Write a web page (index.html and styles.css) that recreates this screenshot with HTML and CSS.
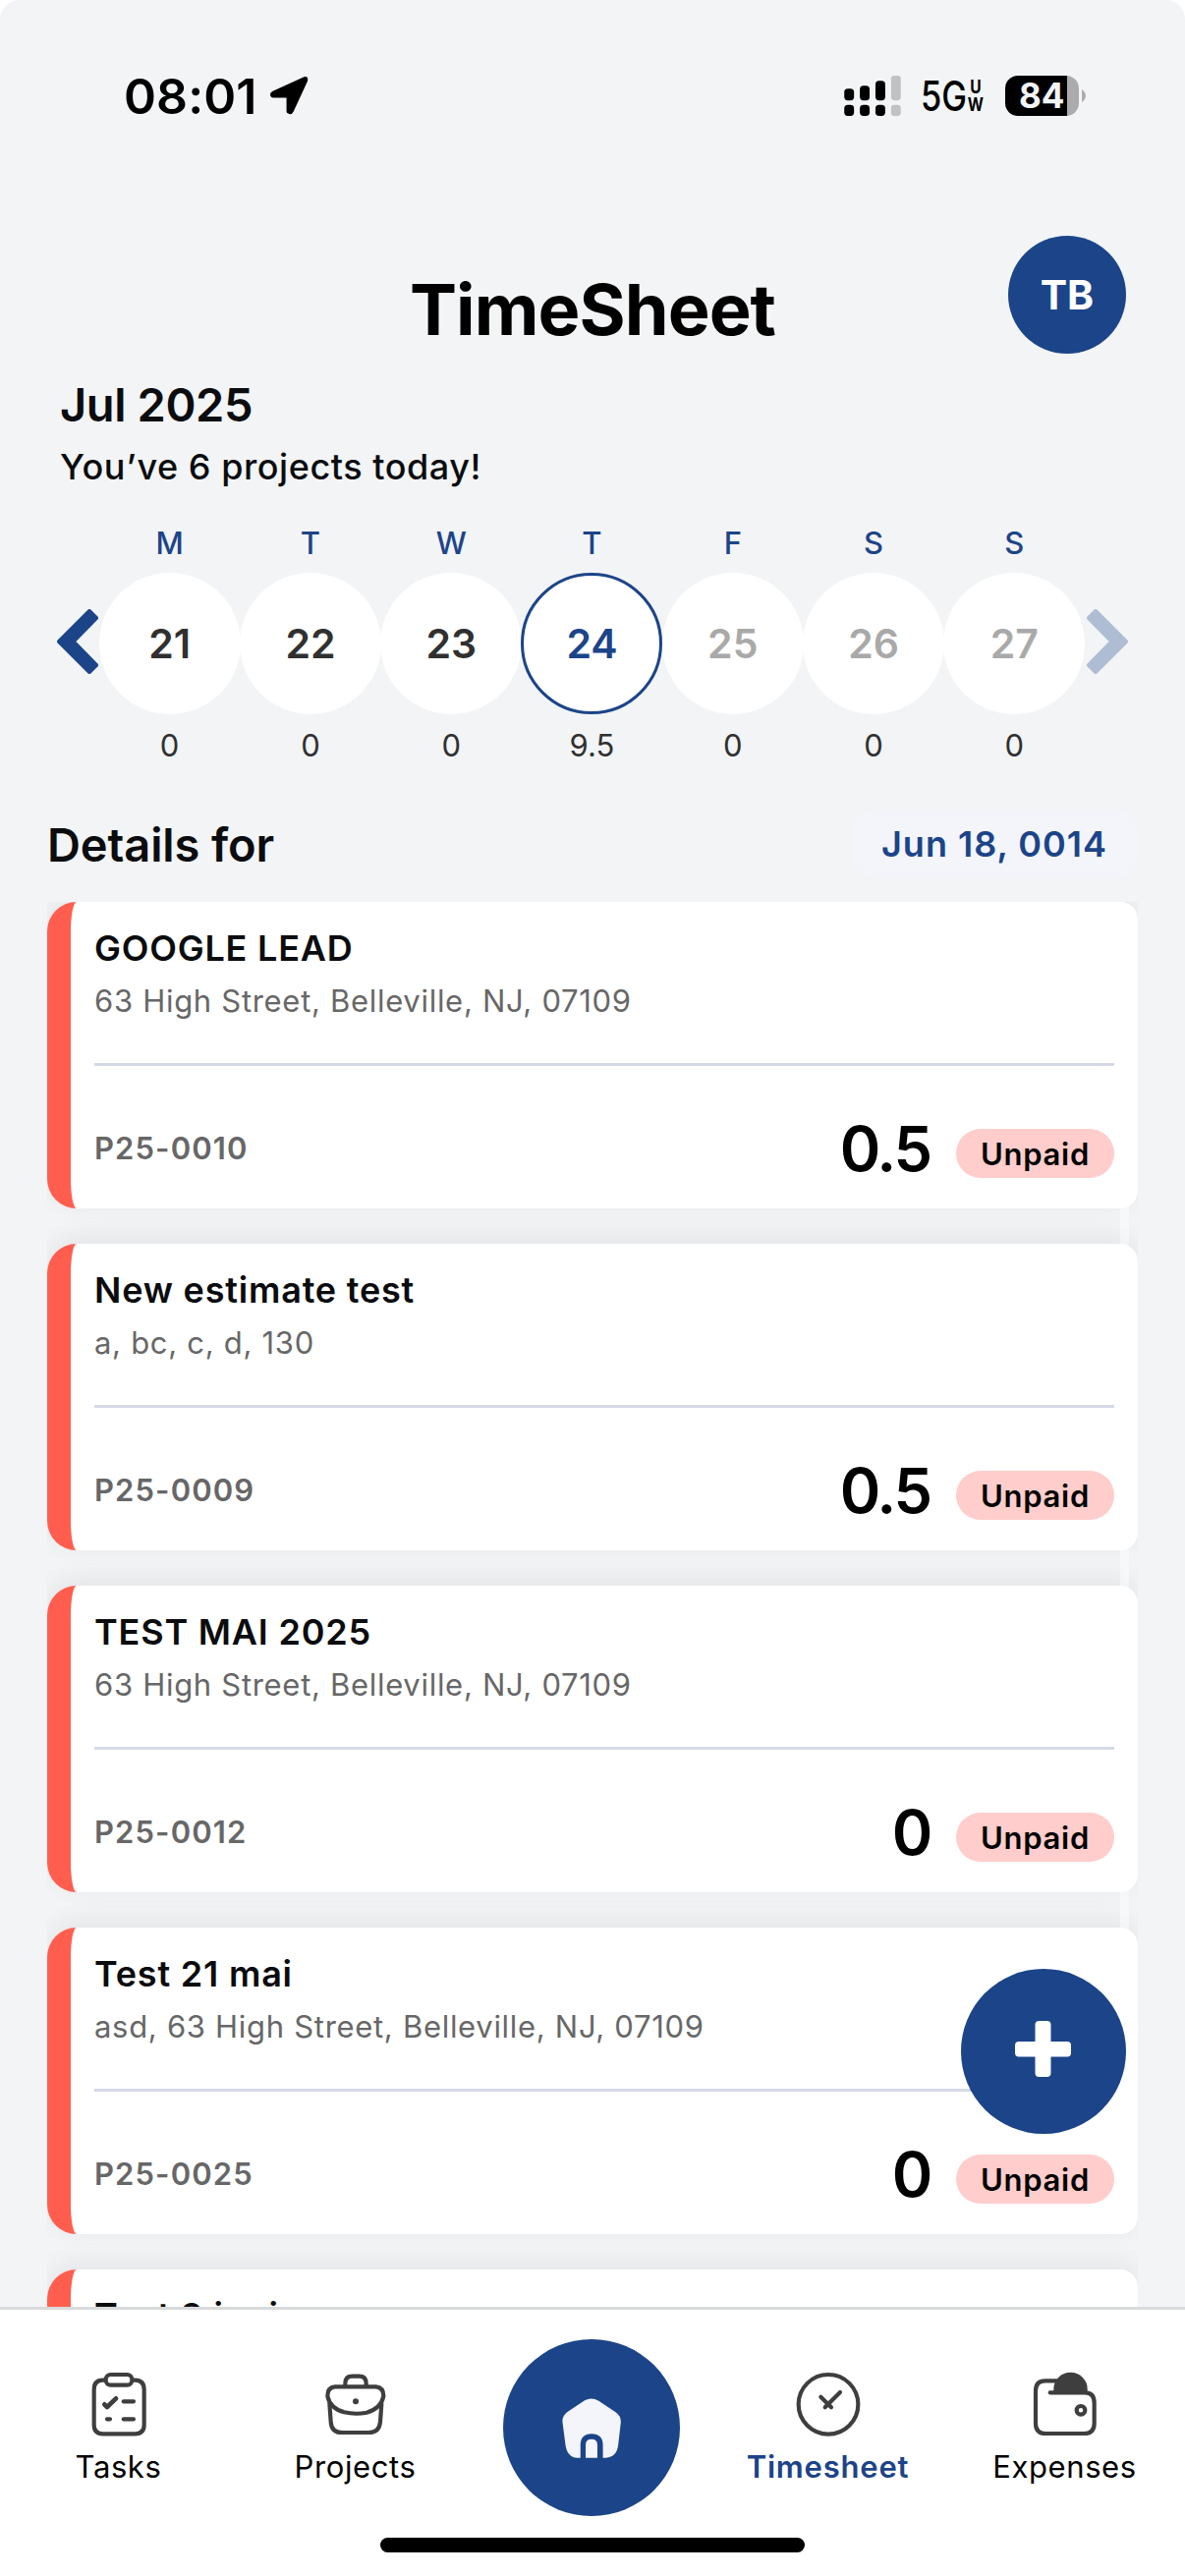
FILE: index.html
```html
<!DOCTYPE html>
<html lang="en">
<head>
    <meta charset="UTF-8">
    <meta name="viewport" content="width=device-width, initial-scale=1.0">
    <title>TimeSheet</title>
    <link rel="stylesheet" href="styles.css">
</head>
<body>
    <div class="screen">
        <!-- Status bar -->
        <div class="status-bar">
            <span class="status-time">08:01</span>
            <svg class="status-location" viewBox="0 0 120 120">
                <path d="M8 45 L106 1 Q120 -3 117 14 L73 109 Q68 119 60 117 Q51 116 51 108 V66 H10 Q0 65 0 55 Q0 49 8 45 Z"/>
            </svg>
            <svg class="status-signal" viewBox="0 0 174 124">
                <g fill="#000">
                    <rect x="0" y="40" width="30" height="36" rx="11"/>
                    <rect x="48" y="31" width="30" height="45" rx="11"/>
                    <rect x="96" y="16" width="30" height="60" rx="11"/>
                    <rect x="0" y="90" width="30" height="34" rx="11"/>
                    <rect x="48" y="90" width="30" height="34" rx="11"/>
                    <rect x="96" y="90" width="30" height="34" rx="11"/>
                </g>
                <g fill="#c1c2c4">
                    <rect x="144" y="0" width="30" height="76" rx="10"/>
                    <rect x="144" y="90" width="30" height="34" rx="10"/>
                </g>
            </svg>
            <div class="status-network">
                <span class="network-name">5G</span>
                <span class="network-band"><span>U</span><span>W</span></span>
            </div>
            <div class="battery"><span class="battery-level">84</span></div>
            <svg class="battery-tip" viewBox="0 0 12 40">
                <path d="M0 0 Q12 8 12 20 Q12 32 0 40 Z" fill="#ababab"/>
            </svg>
        </div>

        <!-- Header -->
        <header class="header">
            <h1 class="title">TimeSheet</h1>
            <div class="avatar">TB</div>
        </header>

        <div class="summary">
            <h2 class="month">Jul 2025</h2>
            <p class="count">You’ve 6 projects today!</p>
        </div>

        <!-- Week picker -->
        <div class="week">
            <svg class="week-arrow" viewBox="0 0 42 66">
                <path d="M2 33 L33 2 L40 9 L16.5 33 L40 57 L33 64 Z"/>
            </svg>
            <div class="day">
                <span class="day-name">M</span>
                <span class="day-number">21</span>
                <span class="day-hours">0</span>
            </div>
            <div class="day">
                <span class="day-name">T</span>
                <span class="day-number">22</span>
                <span class="day-hours">0</span>
            </div>
            <div class="day">
                <span class="day-name">W</span>
                <span class="day-number">23</span>
                <span class="day-hours">0</span>
            </div>
            <div class="day">
                <span class="day-name">T</span>
                <span class="day-number day-selected">24</span>
                <span class="day-hours">9.5</span>
            </div>
            <div class="day">
                <span class="day-name">F</span>
                <span class="day-number day-future">25</span>
                <span class="day-hours">0</span>
            </div>
            <div class="day">
                <span class="day-name">S</span>
                <span class="day-number day-future">26</span>
                <span class="day-hours">0</span>
            </div>
            <div class="day">
                <span class="day-name">S</span>
                <span class="day-number day-future">27</span>
                <span class="day-hours">0</span>
            </div>
            <svg class="week-arrow week-arrow-disabled" viewBox="0 0 42 66">
                <path d="M40 33 L9 2 L2 9 L25.5 33 L2 57 L9 64 Z"/>
            </svg>
        </div>

        <div class="details">
            <h2 class="details-title">Details for</h2>
            <span class="details-date">Jun 18, 0014</span>
        </div>

        <!-- Project cards -->
        <main class="list">
            <article class="card">
                <h3 class="card-title">GOOGLE LEAD</h3>
                <p class="card-address">63 High Street, Belleville, NJ, 07109</p>
                <div class="card-footer">
                    <span class="card-code">P25-0010</span>
                    <span class="card-hours">0.5</span>
                    <span class="card-status">Unpaid</span>
                </div>
            </article>
            <article class="card">
                <h3 class="card-title">New estimate test</h3>
                <p class="card-address">a, bc, c, d, 130</p>
                <div class="card-footer">
                    <span class="card-code">P25-0009</span>
                    <span class="card-hours">0.5</span>
                    <span class="card-status">Unpaid</span>
                </div>
            </article>
            <article class="card">
                <h3 class="card-title">TEST MAI 2025</h3>
                <p class="card-address">63 High Street, Belleville, NJ, 07109</p>
                <div class="card-footer">
                    <span class="card-code">P25-0012</span>
                    <span class="card-hours">0</span>
                    <span class="card-status">Unpaid</span>
                </div>
            </article>
            <article class="card">
                <h3 class="card-title">Test 21 mai</h3>
                <p class="card-address">asd, 63 High Street, Belleville, NJ, 07109</p>
                <div class="card-footer">
                    <span class="card-code">P25-0025</span>
                    <span class="card-hours">0</span>
                    <span class="card-status">Unpaid</span>
                </div>
            </article>
            <article class="card">
                <h3 class="card-title">Test 9 iuni</h3>
            </article>
            <div class="scroll-indicator"></div>
        </main>

        <button class="add-button" aria-label="Add">
            <svg viewBox="0 0 57 57">
                <rect x="20.5" y="0" width="16" height="57" rx="4"/>
                <rect x="0" y="21" width="57" height="15.5" rx="4"/>
            </svg>
        </button>

        <!-- Tab bar -->
        <nav class="tab-bar">
            <div class="tabs">
                <a class="tab">
                    <svg class="tab-icon" viewBox="75 62 216 216">
                        <path d="M142 97 H134 Q107 97 107 126 V234 Q107 261 134 261 H232 Q260 261 260 234 V126 Q260 97 232 97 H225"/>
                        <rect x="143" y="80" width="80" height="32" rx="15"/>
                        <path d="M139 171 L147 179 L174 153" stroke-width="14"/>
                        <path d="M197 162 H228 M197 216 H228 M147 216 H156"/>
                    </svg>
                    <span class="tab-label">Tasks</span>
                </a>
                <a class="tab">
                    <svg class="tab-icon" viewBox="799 62 216 216">
                        <path d="M875 116 V107 Q875 85 897 85 H917 Q939 85 939 107 V116"/>
                        <path d="M843 117 H969 Q992 119 992 146 Q984 184 940 196 Q906 203 872 195 Q829 183 821 146 Q821 119 843 117 Z"/>
                        <path d="M827 168 L831 224 Q833 257 865 257 H947 Q979 257 982 224 L986 168"/>
                        <circle class="fill" cx="907" cy="162" r="9"/>
                    </svg>
                    <span class="tab-label">Projects</span>
                </a>
                <a class="tab tab-home">
                    <svg class="home-icon" viewBox="216 210 180 184">
                        <path d="M285 217 Q306 206 328 218 L380 253 Q397 265 396 284 L388 353 Q384 390 350 393 H341 V354 Q341 319 306 319 Q272 319 272 354 V393 H262 Q231 391 226 353 L217 284 Q215 265 232 252 Z"/>
                        <path d="M288 393 V354 Q288 336 306 336 Q324 336 324 354 V393 Z"/>
                    </svg>
                </a>
                <a class="tab tab-active">
                    <svg class="tab-icon" viewBox="140 62 216 216">
                        <circle cx="248" cy="171" r="91"/>
                        <path d="M225 148 L257 180 M284 134 L238 180"/>
                    </svg>
                    <span class="tab-label">Timesheet</span>
                </a>
                <a class="tab">
                    <svg class="tab-icon" viewBox="868 62 216 216">
                        <path d="M950 99 H915 Q886 99 886 130 V229 Q886 260 917 260 H1033 Q1065 260 1065 229 V166 Q1065 135 1036 135 H930"/>
                        <path class="fill" d="M941 138 V123 A51 49 0 0 1 1044 123 V138 Z"/>
                        <circle cx="1024" cy="189" r="13"/>
                    </svg>
                    <span class="tab-label">Expenses</span>
                </a>
            </div>
            <div class="home-indicator"></div>
        </nav>
    </div>
</body>
</html>
```
FILE: styles.css
```css
* {
    box-sizing: border-box;
}

body {
    margin: 0;
    background: #fff;
    font-family: Inter, "Liberation Sans", sans-serif;
    color: #0b0c0e;
}

h1, h2, h3, p {
    margin: 0;
}

.screen {
    position: relative;
    display: flex;
    flex-direction: column;
    width: 1206px;
    height: 2622px;
    background: #f2f4f6;
    border-radius: 20px 20px 0 0;
    overflow: hidden;
}

/* Status bar */
.status-bar {
    display: flex;
    align-items: center;
    height: 195px;
    padding: 0 101px 0 126px;
    color: #000;
}

.status-time {
    font-size: 50px;
    font-weight: 600;
    letter-spacing: 0.1px;
}

.status-location {
    width: 39px;
    height: 39px;
    margin-left: 13px;
}

.status-signal {
    width: 58px;
    height: 41px;
    margin-left: auto;
}

.status-network {
    display: flex;
    align-items: center;
    gap: 1px;
    width: 82px;
    margin-left: 20px;
    margin-right: 4px;
    transform: scaleX(0.82);
    transform-origin: left center;
}

.network-name {
    font-size: 42px;
    font-weight: 500;
    line-height: 42px;
}

.network-band {
    display: flex;
    flex-direction: column;
    align-items: center;
    font-size: 19px;
    font-weight: 700;
    line-height: 18px;
}

.battery {
    width: 75px;
    height: 41px;
    border-radius: 13px;
    background: linear-gradient(to right, #000 63px, #ababab 63px);
    padding-left: 14px;
}

.battery-level {
    font-size: 35px;
    font-weight: 700;
    line-height: 41px;
    color: #f2f4f6;
}

.battery-tip {
    width: 4px;
    height: 13px;
    margin-left: 3px;
}

/* Header */
.header {
    display: grid;
    grid-template-columns: 1fr auto 1fr;
    height: 165px;
    padding: 45px 60px 0;
}

.title {
    grid-column: 2;
    padding-top: 30px;
    font-size: 72px;
    font-weight: 700;
    line-height: 90px;
    letter-spacing: -0.9px;
    color: #000;
}

.avatar {
    justify-self: end;
    width: 120px;
    height: 120px;
    border-radius: 50%;
    background: #1c4488;
    color: #fff;
    font-size: 41px;
    font-weight: 700;
    line-height: 120px;
    text-align: center;
}

.summary {
    padding: 22px 61px 0;
}

.month {
    font-size: 47px;
    font-weight: 600;
    line-height: 60px;
    letter-spacing: -0.4px;
}

.count {
    margin-top: 9px;
    font-size: 36px;
    font-weight: 500;
    line-height: 48px;
    letter-spacing: 0.55px;
}

/* Week picker */
.week {
    display: flex;
    align-items: center;
    padding: 36px 58px 0;
}

.week-arrow {
    flex: none;
    width: 42px;
    height: 66px;
    margin: 0 1px 7px 0;
    fill: #1c4488;
    stroke: #1c4488;
    stroke-width: 4;
    stroke-linejoin: round;
}

.week-arrow-disabled {
    margin: 0 0 7px 2px;
    fill: #afbdd4;
    stroke: #afbdd4;
}

.day {
    flex: 1 1 0;
    min-width: 0;
    display: flex;
    flex-direction: column;
    align-items: center;
}

.day-name {
    font-size: 31px;
    font-weight: 500;
    line-height: 36px;
    color: #1c4488;
}

.day-number {
    width: 144px;
    height: 144px;
    margin: 12px -1px 14px;
    border-radius: 50%;
    background: #fff;
    font-size: 41px;
    font-weight: 600;
    line-height: 144px;
    text-align: center;
    color: #303030;
}

.day-selected {
    border: 3px solid #1c4488;
    line-height: 138px;
    color: #1c4488;
}

.day-future {
    color: #a9a9a9;
}

.day-hours {
    font-size: 31px;
    line-height: 36px;
    color: #303030;
}

/* Details row */
.details {
    display: flex;
    justify-content: space-between;
    align-items: center;
    margin: 47px 48px 24px;
}

.details-title {
    padding-top: 1px;
    font-size: 47px;
    font-weight: 600;
    line-height: 69px;
    letter-spacing: -0.1px;
}

.details-date {
    height: 70px;
    padding: 0 31px 0 29px;
    border-radius: 24px;
    background: #f3f5fa;
    font-size: 36px;
    font-weight: 600;
    line-height: 71px;
    letter-spacing: 1px;
    color: #1c4488;
}

/* Cards */
.list {
    position: relative;
    display: flex;
    flex-direction: column;
    gap: 36px;
    height: 1430px;
    margin: 0 48px;
    overflow: hidden;
}

.card {
    flex: none;
    height: 312px;
    padding: 25px 24px 0;
    border-left: 24px solid #ff5e4f;
    border-radius: 30px 18px 18px 30px;
    background: #fff;
    box-shadow: 0 -6px 28px rgba(0, 0, 0, 0.07);
}

.card-title {
    font-size: 36px;
    font-weight: 600;
    line-height: 44px;
    letter-spacing: 0.8px;
}

.card-address {
    margin-top: 12px;
    font-size: 31px;
    line-height: 40px;
    letter-spacing: 0.7px;
    color: #676767;
}

.card-footer {
    display: flex;
    align-items: flex-start;
    margin-top: 43px;
    padding-top: 60px;
    border-top: 3px solid #d5d9e7;
}

.card-code {
    font-size: 31px;
    font-weight: 600;
    line-height: 48px;
    letter-spacing: 1.1px;
    color: #676767;
}

.card-hours {
    margin-left: auto;
    font-size: 63px;
    font-weight: 600;
    line-height: 48px;
    letter-spacing: -2.2px;
    color: #000;
}

.card-status {
    width: 161px;
    height: 50px;
    margin: 4px 0 0 26px;
    border-radius: 25px;
    background: #ffcdcb;
    font-size: 31px;
    font-weight: 600;
    line-height: 51px;
    letter-spacing: 0.7px;
    text-align: center;
    color: #000;
}

.scroll-indicator {
    position: absolute;
    top: 6px;
    right: 9px;
    width: 9px;
    height: 1060px;
    border-radius: 5px;
    background: rgba(255, 255, 255, 0.45);
}

/* Floating button */
.add-button {
    position: absolute;
    top: 2004px;
    right: 60px;
    display: flex;
    align-items: center;
    justify-content: center;
    width: 168px;
    height: 168px;
    padding: 0 1px 5px 0;
    border: 0;
    border-radius: 50%;
    background: #1c4488;
}

.add-button svg {
    width: 57px;
    height: 57px;
    fill: #fff;
}

/* Tab bar */
.tab-bar {
    flex: 1;
    border-top: 3px solid #d8dadb;
    background: #fff;
}

.tabs {
    display: flex;
    height: 232px;
    padding: 30px 2px 0 0;
}

.tab {
    flex: 1 1 0;
    display: flex;
    flex-direction: column;
    align-items: center;
    padding-top: 30px;
}

.tab-icon {
    width: 72px;
    height: 72px;
    fill: none;
    stroke: #3e3e3e;
    stroke-width: 12.5;
    stroke-linecap: round;
    stroke-linejoin: round;
}

.tab-icon .fill {
    fill: #3e3e3e;
    stroke: none;
}

.tab-label {
    margin-top: 8px;
    font-size: 31px;
    line-height: 40px;
    letter-spacing: 0.6px;
    color: #000;
}

.tab-active .tab-label {
    font-weight: 600;
    letter-spacing: 0.8px;
    color: #1c4488;
}

.tab-home {
    flex: none;
    justify-content: center;
    width: 180px;
    height: 180px;
    margin: 0 30px;
    padding-top: 0;
    border-radius: 50%;
    background: #1c4488;
}

.home-icon {
    width: 60px;
    height: 61px;
    fill: #f3f5fa;
}

.home-indicator {
    width: 432px;
    height: 15px;
    margin: 0 auto;
    border-radius: 8px;
    background: #000;
}
```
